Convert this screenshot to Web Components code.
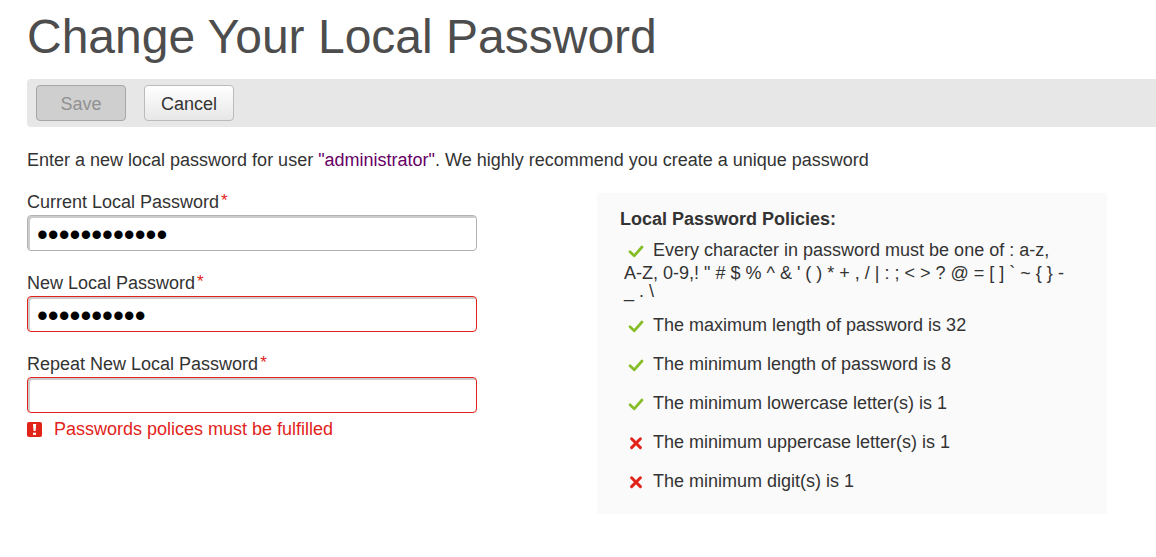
<!DOCTYPE html>
<html lang="en">
<head>
<meta charset="utf-8">
<title>Change Your Local Password</title>
<style>
body { margin: 0; background: #fff; color: #333; font: 18px/20px "Liberation Sans", Arial, sans-serif; }
</style>
</head>
<body>
<password-page></password-page>
<script>
class BaseElement extends HTMLElement {
  constructor() {
    super();
    this.attachShadow({ mode: "open" });
  }
  connectedCallback() {
    this.shadowRoot.innerHTML = this.render();
  }
}

customElements.define("action-bar", class extends BaseElement {
  render() {
    return `<style>
      :host { display: flex; gap: 18px; padding: 6px 9px; background: #e7e7e7; border-radius: 4px 0 0 4px; }
      button { box-sizing: border-box; width: 90px; height: 36px; padding: 2px 0 0; font: inherit; color: #333;
        border: 1px solid #bbb; border-radius: 4px; background: linear-gradient(#fff, #e7e7e7); }
      button:disabled { color: #919191; border-color: #a6a6a6; background: #cfcfcf; }
    </style>
    <button type="button" disabled>Save</button><button type="button">Cancel</button>`;
  }
});

customElements.define("password-field", class extends BaseElement {
  render() {
    const value = this.getAttribute("value") || "";
    return `<style>
      :host { display: block; }
      label { display: block; margin-bottom: 4px; line-height: 18px; }
      sup { margin-left: 2px; font-size: 17px; line-height: 0; vertical-align: 2px; color: #e2231a; }
      input { box-sizing: border-box; display: block; width: 100%; height: 36px; margin: 0; padding: 4px 9px 0;
        border: 1px solid #b3b3b3; border-radius: 4px; background: #fff; color: #000; outline: 0;
        box-shadow: inset 2px 2px #ccc; font: 31px/30px "Liberation Sans", Arial, sans-serif; }
      :host([invalid]) input { border-color: #e2231a; }
    </style>
    <label for="field"><slot></slot><sup>*</sup></label>
    <input id="field" type="password" value="${value}" required>`;
  }
});

customElements.define("error-message", class extends BaseElement {
  render() {
    return `<style>
      :host { display: flex; align-items: center; gap: 12px; color: #e2231a; }
      svg { width: 15px; height: 15px; }
    </style>
    <svg viewBox="0 0 15 15" aria-hidden="true">
      <rect width="15" height="15" rx="2" fill="#e2231a"/>
      <path d="M6 2h3.2l-.6 7H6.6z" fill="#fff"/><rect x="6" y="10.7" width="3" height="2.2" fill="#fff"/>
    </svg><span role="alert"><slot></slot></span>`;
  }
});

customElements.define("policy-item", class extends BaseElement {
  render() {
    const icon = this.hasAttribute("failed")
      ? '<path d="M3.6 3.8l8.8 8.8M12.4 3.8l-8.8 8.8" stroke="#e2231a" stroke-width="3"/>'
      : '<path d="M2 8.8l4.2 4L14 4" stroke="#84bd25" stroke-width="2.7"/>';
    return `<style>
      :host { display: block; line-height: 18px; }
      svg { display: inline-block; width: 16px; height: 16px; margin: 0 9px 5px 4px; vertical-align: -8px; }
    </style>
    <svg viewBox="0 0 16 16" fill="none" stroke-linecap="round" stroke-linejoin="round" aria-hidden="true">${icon}</svg><slot></slot>`;
  }
});

customElements.define("policy-panel", class extends BaseElement {
  render() {
    return `<style>
      :host { display: block; box-sizing: border-box; padding: 16px 40px 19px 23px; background: #fafafa; }
      h2 { margin: 0 0 12px; font-size: 18px; line-height: 20px; }
      div { display: flex; flex-direction: column; gap: 16px; padding-left: 4px; }
    </style>
    <h2>Local Password Policies:</h2>
    <div role="list"><slot></slot></div>`;
  }
});

customElements.define("password-page", class extends BaseElement {
  render() {
    return `<style>
      :host { display: block; padding: 9px 0 43px 27px; }
      h1 { margin: 0 0 14px; font-size: 48px; line-height: 56px; font-weight: normal; color: #4d4d4d; }
      p { margin: 23px 0; }
      .user { color: #606; }
      main { display: grid; grid-template-columns: minmax(0, 450px) minmax(0, 510px); justify-content: space-between;
        align-items: start; margin-right: 49px; }
      form { display: flex; flex-direction: column; gap: 23px; }
      error-message { margin-top: -17px; }
    </style>
    <h1>Change Your Local Password</h1>
    <action-bar></action-bar>
    <p>Enter a new local password for user <span class="user">"administrator"</span>. We highly recommend you create a unique password</p>
    <main>
      <form>
        <password-field value="abcdefghijkl">Current Local Password</password-field>
        <password-field value="abcdefghij" invalid>New Local Password</password-field>
        <password-field invalid>Repeat New Local Password</password-field>
        <error-message>Passwords polices must be fulfilled</error-message>
      </form>
      <policy-panel>
        <policy-item role="listitem">Every character in password must be one of : a-z, A-Z, 0-9,! " # $ % ^ &amp; ' ( ) * + , / | : ; &lt; &gt; ? @ = [ ] \` ~ { } - _ . \\</policy-item>
        <policy-item role="listitem">The maximum length of password is 32</policy-item>
        <policy-item role="listitem">The minimum length of password is 8</policy-item>
        <policy-item role="listitem">The minimum lowercase letter(s) is 1</policy-item>
        <policy-item role="listitem" failed>The minimum uppercase letter(s) is 1</policy-item>
        <policy-item role="listitem" failed>The minimum digit(s) is 1</policy-item>
      </policy-panel>
    </main>`;
  }
});
</script>
</body>
</html>
